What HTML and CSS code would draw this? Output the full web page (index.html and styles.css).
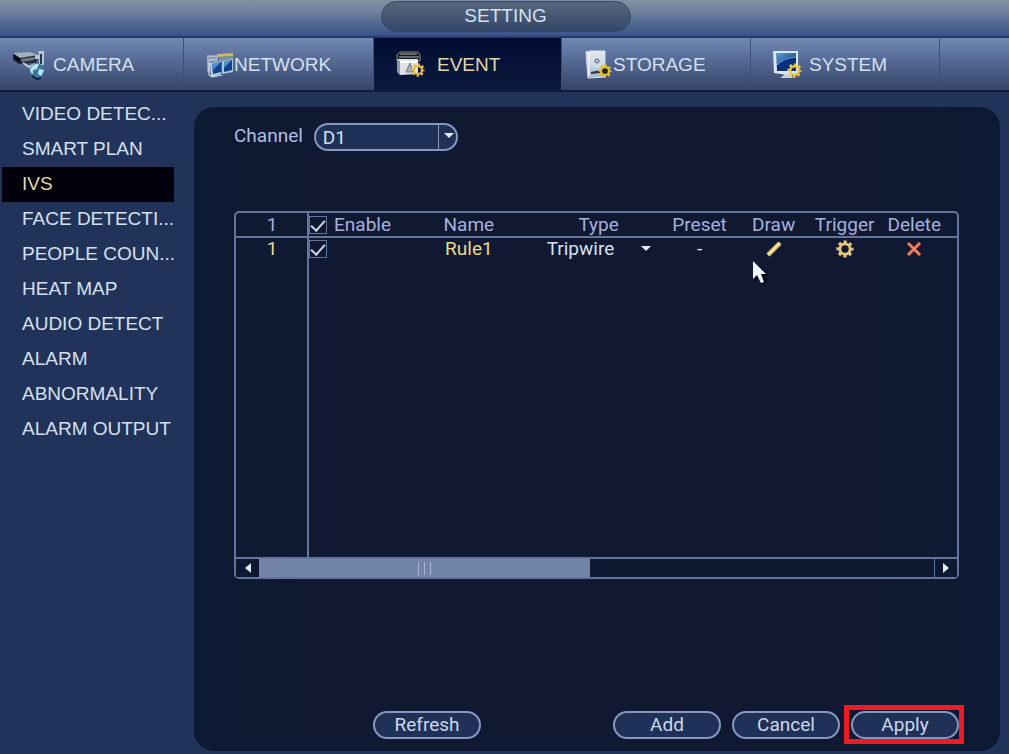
FILE: index.html
```
<!DOCTYPE html>
<html lang="en">
<head>
  <meta charset="UTF-8" />
  <meta name="viewport" content="width=device-width, initial-scale=1.0"/>
  <title>Setting</title>
  <link rel="stylesheet" href="styles.css">
</head>
<body>
  <svg class="defs" width="0" height="0" aria-hidden="true">
    <defs>
      <linearGradient id="screen" x1="0" y1="0" x2="1" y2="1">
        <stop offset="0" stop-color="#5d9ad0"/>
        <stop offset="1" stop-color="#062c78"/>
      </linearGradient>
      <linearGradient id="metal" x1="0" y1="0" x2="0" y2="1">
        <stop offset="0" stop-color="#e6edf2"/>
        <stop offset="1" stop-color="#a9b9d2"/>
      </linearGradient>
      <symbol id="gear" viewBox="0 0 20 20">
        <circle cx="10" cy="10" r="8" fill="none" stroke="currentColor" stroke-width="3" stroke-dasharray="3.4 2.883" stroke-dashoffset="1.7"/>
        <circle cx="10" cy="10" r="5.7" fill="none" stroke="currentColor" stroke-width="3.2"/>
      </symbol>
    </defs>
  </svg>

  <header class="title-bar">
    <h1 class="title">SETTING</h1>
  </header>

  <nav class="tabs">
    <a href="#" class="tab first">
      <svg width="34" height="30" viewBox="0 0 34 30">
        <path d="M1 4l17-2 8 4-2 7-17 1-6-4z" fill="#222b36"/>
        <path d="M1 3l17-1 8 3-18 3z" fill="#a5b1ba"/>
        <path d="M2 5l6 3v5l-6-4z" fill="#080e18"/>
        <path d="M9 9l14-2-1 3-12 2z" fill="#6b7a8a"/>
        <path d="M26 1h6v14h-5V9h-4V5h4z" fill="#b4c7d0"/>
        <path d="M29 4v10" stroke="#263646" stroke-width="2"/>
        <path d="M11 13l6 4 6-3" stroke="#c4d2da" stroke-width="2" fill="none"/>
        <circle cx="25" cy="21" r="7.5" fill="#367aa4"/>
        <path d="M18 19q4-6 9-5l-2 5-4 1v4q-3-1-3-5zM27 19l5 1-3 6-3-2z" fill="#bfe2e9"/>
        <path d="M20 26l5 3 4-1" stroke="#0b2037" stroke-width="2" fill="none"/>
      </svg>
      CAMERA
    </a>
    <a href="#" class="tab tight">
      <svg width="28" height="26" viewBox="0 0 28 26">
        <path d="M1 4h11v5L4 10v11l-3-2z" fill="#8fa3b8"/>
        <path d="M1 4h11M1 8h10" stroke="#c9d5e0" stroke-width="1"/>
        <path d="M11 2l16-1v3l-16 1z" fill="#d3b55c"/>
        <path d="M13 5l14-1v4l-14 1z" fill="#7c8f9f"/>
        <path d="M4 11l11-2v13L5 25z" fill="#b9d2e6"/>
        <path d="M16 9l11-2v13l-11 2z" fill="#a7c4de"/>
        <path d="M6 12l9-2v10l-8 2z" fill="#0d418c"/>
        <path d="M6 12l9-2-8 8z" fill="#4f8fc8"/>
        <path d="M18 10l8-2v10l-8 2z" fill="#0d418c"/>
        <path d="M18 10l8-2-8 8z" fill="#4f8fc8"/>
        <path d="M3 10v13l3 2 10-2" stroke="#e5eff6" stroke-width="1" fill="none"/>
      </svg>
      NETWORK
    </a>
    <a href="#" class="tab active wide">
      <svg width="30" height="28" viewBox="0 0 30 28">
        <path d="M2 4l3-3h18l2 3v6H2z" fill="#101820" stroke="#8a8f8c"/>
        <path d="M5 3h17M4 6h20" stroke="#b5b8b4" stroke-width="1"/>
        <path d="M2 8h21v15L5 24l-3-4z" fill="#dfe3e6"/>
        <path d="M2 8l3 2v14l-3-3z" fill="#8f989f"/>
        <path d="M5 11h18" stroke="#fff" stroke-width="2"/>
        <path d="M15 12l-4 9h7z" fill="#a9adb3" stroke="#777b82" stroke-width="1"/>
        <svg x="16" y="12" width="14" height="14" color="#e8bd42"><use href="#gear"/></svg>
      </svg>
      EVENT
    </a>
    <a href="#" class="tab tight">
      <svg width="29" height="30" viewBox="0 0 29 30">
        <path d="M2 2l4-1h15v26l-17 1z" fill="url(#metal)" stroke="#d9e2ee"/>
        <path d="M5 3v23" stroke="#fff" stroke-width="1"/>
        <circle cx="13" cy="11" r="5" fill="none" stroke="#d9e0e8" stroke-width="2"/>
        <circle cx="13" cy="11" r="2" fill="#c4ccd7" stroke="#536072"/>
        <path d="M7 22l9-2v3l-9 1z" fill="#35353c"/>
        <svg x="14" y="14" width="14" height="14"><circle cx="7" cy="7" r="4" fill="#252413"/><use href="#gear" color="#e7c02e"/></svg>
      </svg>
      STORAGE
    </a>
    <a href="#" class="tab">
      <svg width="30" height="30" viewBox="0 0 30 30">
        <path d="M1 1h25v23l-10 1-14-2z" fill="#dce7f2"/>
        <path d="M4 3h20v18H5z" fill="url(#screen)"/>
        <path d="M5 15q7-7 19-8v14H5z" fill="#06307e"/>
        <path d="M5 15q7-7 19-8" stroke="#6498cf" fill="none"/>
        <path d="M12 24h8v3l3 1H8l3-2z" fill="#c2d0df"/>
        <svg x="15" y="13" width="15" height="15" color="#e9ca43"><use href="#gear"/></svg>
      </svg>
      SYSTEM
    </a>
  </nav>

  <div class="content">
    <aside class="sidebar">
      <a href="#">VIDEO DETEC...</a>
      <a href="#">SMART PLAN</a>
      <a href="#" class="active">IVS</a>
      <a href="#">FACE DETECTI...</a>
      <a href="#">PEOPLE COUN...</a>
      <a href="#">HEAT MAP</a>
      <a href="#">AUDIO DETECT</a>
      <a href="#">ALARM</a>
      <a href="#">ABNORMALITY</a>
      <a href="#">ALARM OUTPUT</a>
    </aside>

    <main class="panel">
      <div class="channel">
        <label for="channel">Channel</label>
        <span class="drop channel-drop">
          <select id="channel"><option>D1</option></select>
        </span>
      </div>

      <section class="rules">
        <table>
          <colgroup>
            <col class="col-num"><col class="col-enable"><col class="col-name"><col class="col-type">
            <col class="col-preset"><col class="col-draw"><col class="col-trigger"><col class="col-delete">
          </colgroup>
          <thead>
            <tr>
              <th>1</th>
              <th class="enable"><label><input type="checkbox" checked>Enable</label></th>
              <th>Name</th>
              <th>Type</th>
              <th>Preset</th>
              <th>Draw</th>
              <th>Trigger</th>
              <th class="last">Delete</th>
            </tr>
          </thead>
          <tbody>
            <tr>
              <td class="gold">1</td>
              <td class="enable"><input type="checkbox" checked aria-label="Enable Rule1"></td>
              <td class="gold">Rule1</td>
              <td>
                <span class="drop type-drop">
                  <select aria-label="Type"><option>Tripwire</option></select>
                </span>
              </td>
              <td>-</td>
              <td class="draw">
                <button class="icon" aria-label="Draw">
                  <svg width="18" height="18" viewBox="0 0 18 18">
                    <path d="M3 15L15 3" stroke="#a98f4e" stroke-width="5"/>
                    <path d="M3 15L15 3" stroke="#f3dc8c" stroke-width="3"/>
                    <path d="M4 13L14 3" stroke="#fff6cc" stroke-width="1"/>
                  </svg>
                </button>
                <svg class="pointer" width="18" height="26" viewBox="0 0 18 26">
                  <path d="M3 3v19l4-4 4 7 4-2-3-7 5-1z" fill="#020611"/>
                  <path d="M1 1v18l4-4 4 8 3-1-3-8h5z" fill="#f1f4fa"/>
                </svg>
              </td>
              <td>
                <button class="icon" aria-label="Trigger">
                  <svg width="18" height="18" viewBox="0 0 20 20" color="#e6c77c"><use href="#gear"/></svg>
                </button>
              </td>
              <td class="last">
                <button class="icon" aria-label="Delete">
                  <svg width="14" height="14" viewBox="0 0 14 14">
                    <path d="M1 1l12 12M13 1L1 13" stroke="#8e3a32" stroke-width="4"/>
                    <path d="M1 1l12 12M13 1L1 13" stroke="#f58a6a" stroke-width="2"/>
                  </svg>
                </button>
              </td>
            </tr>
          </tbody>
        </table>
        <div class="scrollbar">
          <button aria-label="Scroll left"><svg width="6" height="10" viewBox="0 0 6 10"><path d="M6 0v10L0 5z" fill="#e4ebf8"/></svg></button>
          <div class="track"><div class="thumb"><i></i><i></i><i></i></div></div>
          <button class="right" aria-label="Scroll right"><svg width="6" height="10" viewBox="0 0 6 10"><path d="M0 0v10l6-5z" fill="#e4ebf8"/></svg></button>
        </div>
      </section>

      <footer class="actions">
        <button class="btn refresh">Refresh</button>
        <button class="btn">Add</button>
        <button class="btn">Cancel</button>
        <span class="marked"><button class="btn">Apply</button></span>
      </footer>
    </main>
  </div>
</body>
</html>
```
FILE: styles.css
```
* {
  box-sizing: border-box;
  margin: 0;
  padding: 0;
}
body {
  font-family: "Liberation Sans", Arial, sans-serif;
  font-size: 19px;
  color: #d5e0ee;
  background: #22335a;
  min-height: 100vh;
  display: flex;
  flex-direction: column;
}
a {
  color: inherit;
  text-decoration: none;
}
button, select {
  font: inherit;
  color: inherit;
  background: none;
  border: none;
}
.defs {
  position: absolute;
}

/* title */
.title-bar {
  height: 38px;
  padding: 1px 0 0 2px;
  display: flex;
  justify-content: center;
  align-items: flex-start;
  background: linear-gradient(#8290a0, #70829f 30%, #4f6690 65%, #3b568a 92%, #1b305a);
}
.title {
  width: 250px;
  height: 31px;
  line-height: 28px;
  border-radius: 16px;
  text-align: center;
  font-size: 19px;
  font-weight: normal;
  background: linear-gradient(#56667d, #34476a);
  border: 1px solid #344766;
}

/* main tabs */
.tabs {
  display: grid;
  grid-template-columns: 184fr 190fr 188fr 189fr 189fr 69fr;
  height: 54px;
  background: linear-gradient(#7088b5, #5d729f 30%, #344568);
  border-bottom: 2px solid #101d42;
}
.tab {
  display: flex;
  align-items: center;
  gap: 7px;
  padding: 2px 0 0 21px;
  border-right: 1px solid #3d5077;
}
.tab.first {
  padding-left: 12px;
}
.tab.tight {
  gap: 0;
  padding-left: 22px;
}
.tab.wide {
  gap: 12px;
}
.tab.active {
  color: #e5d6a4;
  background: linear-gradient(#020c32, #0c1a3e);
}
.tab svg {
  flex: none;
}

.content {
  flex: 1;
  display: flex;
}
.sidebar {
  width: 194px;
  flex: none;
  padding: 5px 20px 0 2px;
}
.sidebar a {
  display: block;
  height: 35px;
  line-height: 33px;
  padding-left: 20px;
  white-space: nowrap;
}
.sidebar .active {
  color: #e5d6a4;
  background: #01020c;
}

/* panel */
.panel {
  flex: 1;
  display: flex;
  flex-direction: column;
  margin: 15px 9px 3px 0;
  padding: 16px 41px 12px 40px;
  border-radius: 20px;
  background: linear-gradient(to right, #0c1a33, #111932 15%, #111932 85%, #0c1a33);
  font-family: Roboto, "Liberation Sans", sans-serif;
}
.channel {
  display: flex;
  gap: 11px;
  height: 28px;
  line-height: 25px;
  margin-bottom: 60px;
  color: #b1bde4;
}
.drop {
  position: relative;
  display: block;
}
.drop select {
  appearance: none;
  width: 100%;
  height: 100%;
  outline: none;
}
.drop::after {
  content: "";
  position: absolute;
  right: 4px;
  top: 10px;
  border: 5px solid transparent;
  border-top-color: #e4ebf8;
  border-bottom: none;
  pointer-events: none;
}
.channel-drop {
  width: 144px;
  height: 28px;
  color: #d5e0f2;
}
.channel-drop select {
  padding: 0 0 2px 7px;
  border: 2px solid #8797bd;
  border-radius: 14px;
  background: linear-gradient(#8797bd, #8797bd) right 17px top / 1px 100% no-repeat #203158;
}

/* rule list, the vertical line runs below the rows too */
.rules {
  flex: 1;
  display: flex;
  flex-direction: column;
  margin-bottom: 132px;
  border: 2px solid #64739a;
  border-radius: 5px;
  background: linear-gradient(#64739a, #64739a) 71px 0 / 2px 100% no-repeat;
}
table {
  width: 100%;
  table-layout: fixed;
  border-collapse: collapse;
}
.col-num { width: 72px; }
.col-enable { width: 96px; }
.col-name { width: 18%; }
.col-type { width: 18%; }
.col-preset { width: 10%; }
.col-draw { width: 76px; }
.col-trigger { width: 66px; }
.col-delete { width: auto; }
th, td {
  height: 24px;
  line-height: 22px;
  text-align: center;
  font-weight: normal;
}
th {
  color: #a6b0dc;
  border-bottom: 2px solid #64739a;
}
td {
  height: 22px;
}
.enable {
  text-align: left;
  padding-left: 1px;
  white-space: nowrap;
}
.enable label {
  display: flex;
  align-items: center;
  gap: 7px;
}
.last {
  padding-right: 6px;
}
.gold {
  color: #ead98e;
}
input[type="checkbox"] {
  appearance: none;
  display: block;
  width: 18px;
  height: 18px;
  border: 1px solid #64739a;
}
input[type="checkbox"]:checked::before {
  content: "";
  display: block;
  width: 6px;
  height: 12px;
  margin: 0 auto;
  border: solid #ccd5e6;
  border-width: 0 2px 2px 0;
  transform: rotate(42deg);
}
.type-drop {
  height: 22px;
  width: 104px;
  margin: 0 auto;
}
.type-drop::after {
  right: 0;
  top: 8px;
}
.icon {
  display: block;
  margin: 0 auto;
  cursor: pointer;
}
.icon svg {
  display: block;
}
.draw {
  position: relative;
}
.pointer {
  position: absolute;
  left: 16px;
  top: 22px;
}

.scrollbar {
  display: flex;
  height: 20px;
  margin-top: auto;
  border-top: 2px solid #64739a;
  background: #0f1831;
}
.scrollbar button {
  width: 23px;
  display: flex;
  align-items: center;
  justify-content: center;
}
.scrollbar .right {
  border-left: 1px solid #64739a;
}
.track {
  flex: 1;
}
.thumb {
  width: 49%;
  height: 100%;
  display: flex;
  justify-content: center;
  align-items: center;
  gap: 5px;
  background: #7285a8;
}
.thumb i {
  width: 1px;
  height: 13px;
  background: #a9b9d6;
}

/* bottom buttons */
.actions {
  display: flex;
  justify-content: flex-end;
  gap: 11px;
}
.btn {
  display: block;
  width: 108px;
  height: 28px;
  line-height: 24px;
  border: 2px solid #8797bd;
  border-radius: 14px;
  background: #203158;
  color: #ccd8ee;
  cursor: pointer;
}
.refresh {
  margin-right: auto;
  margin-left: 139px;
}
.marked {
  position: relative;
}
.marked::after {
  content: "";
  position: absolute;
  inset: -6px -5px -5px -7px;
  border: 5px solid #ed1c24;
  pointer-events: none;
}
```
